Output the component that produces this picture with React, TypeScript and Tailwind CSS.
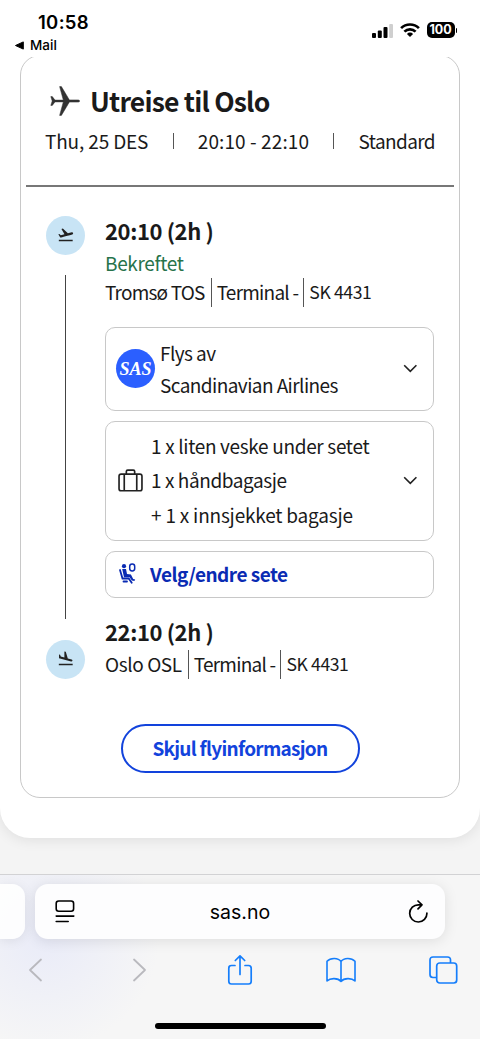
import React from 'react';
import { MdFlightTakeoff, MdFlightLand } from 'react-icons/md';

const Chevron: React.FC = () => (
  <svg className="h-[9px] w-[15px] shrink-0" viewBox="0 0 15 9" fill="none" stroke="#222" strokeWidth="1.6">
    <path d="M1.2 1.2 7.3 7.4 13.4 1.2" />
  </svg>
);

const StatusBar: React.FC = () => (
  <div className="flex h-[57px] shrink-0 justify-between bg-white font-['Inter','Liberation_Sans',sans-serif] text-black">
    <div className="pl-[15px] pt-[11px]">
      <div className="pl-[23px] text-[18.5px] font-semibold leading-[22px] tracking-[0.3px]">10:58</div>
      <div className="mt-[3px] flex items-center gap-[6px] text-[13.5px] font-medium leading-[18px]">
        <svg className="h-[9px] w-[9px]" viewBox="0 0 9 9">
          <path d="M.5 4.5 8.3.9v7.2z" stroke="#000" strokeLinejoin="round" />
        </svg>
        Mail
      </div>
    </div>
    <div className="mt-[22px] flex h-[16px] items-center pr-[23px]">
      <svg className="h-[15px] w-[21px]" viewBox="0 0 21 15">
        <rect x="0" y="10" width="4" height="5" rx="1" />
        <rect x="5.8" y="7.5" width="4" height="7.5" rx="1" />
        <rect x="11.5" y="4" width="4" height="11" rx="1" />
        <rect x="17.2" y="1" width="3.8" height="14" rx="1" fill="#cfcfcf" />
      </svg>
      <svg className="ml-[7px] h-[14px] w-[20px]" viewBox="0 0 20 14" fill="none" stroke="#000" strokeWidth="2.7">
        <path d="M1.1 5.1a12.8 12.8 0 0 1 17.8 0" />
        <path d="M4.4 8.6a8 8 0 0 1 11.2 0" />
        <path d="M10 14 6.9 10.9a4.4 4.4 0 0 1 6.2 0z" fill="#000" stroke="none" />
      </svg>
      <div className="ml-[7px] flex h-[16px] w-[28px] items-center justify-center rounded-[5px] bg-black text-[12.5px] font-bold leading-none text-white">
        100
      </div>
      <div className="ml-[1px] h-[5px] w-[1.5px] rounded-r bg-black" />
    </div>
  </div>
);

const StopIcon: React.FC<{ children: React.ReactNode }> = ({ children }) => (
  <div className="flex h-[39px] w-[39px] items-center justify-center rounded-full bg-[#c8e4f5] text-[#222]">
    {children}
  </div>
);

const StopDetails: React.FC<{ airport: string; tracking: string }> = ({ airport, tracking }) => (
  <div className="flex h-[29px] items-center whitespace-nowrap">
    <span className={`mr-[6px] ${tracking}`}>{airport}</span>
    <span className="h-[29px] w-px bg-[#555]" />
    <span className="ml-[5px] mr-[5px] tracking-[-0.75px]">Terminal -</span>
    <span className="h-[29px] w-px bg-[#555]" />
    <span className="ml-[5px] text-[17.6px] tracking-[-0.4px]">SK 4431</span>
  </div>
);

const SeatIcon: React.FC = () => (
  <svg className="h-[22px] w-[18px]" viewBox="0 0 18 22" fill="#0a2bb3">
    <circle cx="5" cy="3.2" r="2.1" />
    <path d="M3.2 6h3.8l1 5 3.9.5 2.3 4.6 2 .4-.8 1.6-2.6-.5-2.2-3.4H5z" />
    <path d="M1 7 3.500 15.5h6.200l3 4.300M4.500 18.500h3.500" fill="none" stroke="#0a2bb3" strokeWidth="1.8" strokeLinecap="round" />
    <rect x="10.700" y="1" width="5" height="7" rx="2.400" fill="none" stroke="#0a2bb3" strokeWidth="1.500" />
  </svg>
);

const FlightCard: React.FC = () => (
  <div className="mx-[20px] -mt-[2px] h-[743px] rounded-[20px] border border-[#c8c8c8] text-[#1a1a1a]">
    {/* Heading */}
    <div className="mt-[25px] flex h-[40px] items-center pl-[29px]">
      <svg className="h-[30px] w-[30px]" viewBox="0 0 30 30" fill="#333" stroke="#333" strokeWidth=".5">
        <path d="M.8 10.600h1.500l2.700 3.500h8.300L9.600.6h1.800l8 13.300h8.300c1.300 0 2 .5 2 1.100s-.7 1.100-2 1.100h-8.300l-8 13.300H9.600l3.700-13.500H5l-2.700 3.500H.8L2.200 15z" />
      </svg>
      <h1 className="ml-[10px] whitespace-nowrap text-[26.5px] font-bold leading-[40px] tracking-[-0.8px]">Utreise til Oslo</h1>
    </div>
    <div className="mx-[24px] mt-[5px] flex h-[30px] items-center justify-between whitespace-nowrap">
      <span className="tracking-[-0.15px]">Thu, 25 DES</span>
      <span className="h-[16px] w-px bg-[#555]" />
      <span className="tracking-[0.1px]">20:10 - 22:10</span>
      <span className="h-[16px] w-px bg-[#555]" />
      <span className="tracking-[-0.6px]">Standard</span>
    </div>
    <div className="mx-[5px] mt-[29px] h-[1.5px] bg-[#777]" />

    {/* Timeline */}
    <div className="mt-[29px] flex pl-[25px]">
      <div className="flex w-[39px] shrink-0 flex-col items-center">
        <StopIcon><MdFlightTakeoff size={17.5} /></StopIcon>
        <div className="mt-[20px] h-[344px] w-px bg-[#444]" />
        <div className="mt-[21px]">
          <StopIcon><MdFlightLand size={17.5} /></StopIcon>
        </div>
      </div>
      <div className="ml-[20px] w-[329px]">
        <div className="h-[30px] text-[22px] font-bold leading-[28px] tracking-[-0.4px]">20:10 (2h )</div>
        <div className="mt-[2px] h-[30px] leading-[30px] tracking-[-0.35px] text-[#27734b]">Bekreftet</div>
        <StopDetails airport="Tromsø TOS" tracking="tracking-[-0.8px]" />

        <button className="mt-[20px] flex h-[84px] w-full items-center rounded-[10px] border border-[#c8c8c8] pl-[10px] pr-[15px] text-left">
          <span className="flex h-[39px] w-[39px] shrink-0 items-center justify-center rounded-full bg-[#2b5fff] font-['Liberation_Serif',serif] text-[18px] font-bold italic leading-none text-white">
            SAS
          </span>
          <span className="ml-[5px] flex-1 leading-[32px] tracking-[-0.57px]">
            Flys av
            <br />
            Scandinavian Airlines
          </span>
          <Chevron />
        </button>

        <button className="mt-[10px] flex h-[120px] w-full items-center rounded-[10px] border border-[#c8c8c8] pl-[12px] pr-[15px] text-left">
          <svg className="h-[23px] w-[25px] shrink-0" viewBox="0 0 24 22" fill="none" stroke="#222" strokeWidth="1.6">
            <rect x="1" y="4.8" width="22" height="16" rx="2" />
            <path d="M8 4.8V2.3Q8 1 9.3 1h5.4Q16 1 16 2.3v2.5M6 4.8v16M18 4.8v16" />
          </svg>
          <span className="ml-[8px] flex-1 leading-[34.5px]">
            <span className="tracking-[-0.33px]">1 x liten veske under setet</span>
            <br />
            <span className="tracking-[-0.42px]">1 x håndbagasje</span>
            <br />
            <span className="tracking-[-0.2px]">+ 1 x innsjekket bagasje</span>
          </span>
          <Chevron />
        </button>

        <button className="mt-[10px] flex h-[47px] w-full items-center rounded-[10px] border border-[#c8c8c8] pl-[13px] font-bold text-[#0a2bb3]">
          <SeatIcon />
          <span className="ml-[13px] tracking-[-0.5px]">Velg/endre sete</span>
        </button>

        <div className="mt-[20px] h-[30px] text-[22px] font-bold leading-[27px] tracking-[-0.4px]">22:10 (2h )</div>
        <div className="mt-[2px]">
          <StopDetails airport="Oslo OSL" tracking="tracking-[-0.4px]" />
        </div>
      </div>
    </div>

    <button className="mx-auto mt-[45px] flex h-[49px] w-[239px] items-center justify-center rounded-full border-[2.5px] border-[#1243dc] font-bold tracking-[-0.7px] text-[#1243dc]">
      Skjul flyinformasjon
    </button>
  </div>
);

const BrowserBar: React.FC = () => (
  <div className="flex h-[165px] shrink-0 flex-col overflow-hidden border-t border-[#d2d2d4] bg-[#f6f6f6] bg-[radial-gradient(circle_at_45px_60px,#e9ebf8_0px,#f6f6f6_115px)] font-['Inter','Liberation_Sans',sans-serif]">
    <div className="mt-[9px] flex gap-[10px]">
      <div className="h-[55px] w-[25px] rounded-r-[13px] bg-white/90 shadow-[0_2px_12px_rgba(0,0,0,0.08)]" />
      <div className="flex h-[55px] w-[410px] items-center justify-between rounded-[13px] bg-[#fdfdfe] pl-[20px] pr-[17px] shadow-[0_2px_14px_rgba(0,0,0,0.1)]">
        <svg className="h-[23px] w-[20px]" viewBox="0 0 20 23" fill="none" stroke="#000" strokeWidth="1.6" strokeLinecap="round">
          <rect x="1.2" y="1" width="17.4" height="10.2" rx="2.5" />
          <path d="M1.2 16.1h17.6M1.2 21.5h12" />
        </svg>
        <span className="mr-[3px] mt-[3px] text-[19.5px] text-black">sas.no</span>
        <svg className="h-[23px] w-[20px]" viewBox="0 0 20 23" fill="none" stroke="#000" strokeWidth="1.7" strokeLinecap="round" strokeLinejoin="round">
          <path d="M14 4.800H10.500A8.600 8.600 0 1 0 18.900 13.200M10 1 14 4.800 10 8.800" />
        </svg>
      </div>
    </div>

    <div className="-ml-[16px] mt-[14px] grid h-[34px] w-[510px] shrink-0 grid-cols-5 place-items-center">
      <svg className="h-[24px] w-[15px]" viewBox="0 0 15 24" fill="none" stroke="#b9b9be" strokeWidth="1.8" strokeLinecap="round" strokeLinejoin="round">
        <path d="M13 1.5 2 12l11 10.5" />
      </svg>
      <svg className="ml-[5px] h-[24px] w-[15px]" viewBox="0 0 15 24" fill="none" stroke="#b9b9be" strokeWidth="1.8" strokeLinecap="round" strokeLinejoin="round">
        <path d="M2 1.5 13 12 2 22.5" />
      </svg>
      <svg className="ml-[2px] h-[32px] w-[26px]" viewBox="0 0 26 32" fill="none" stroke="#157efb" strokeWidth="1.7" strokeLinecap="round" strokeLinejoin="round">
        <path d="M8 11.5H4.5Q1.8 11.5 1.8 14.2v13.1Q1.8 30 4.5 30h17q2.7 0 2.7-2.7V14.2q0-2.7-2.7-2.7H18M13 20.5V2M8.3 6.5 13 1.8l4.7 4.7" />
      </svg>
      <svg className="h-[26px] w-[30px]" viewBox="0 0 30 26" fill="none" stroke="#157efb" strokeWidth="1.6" strokeLinejoin="round">
        <path d="M15 4.5C12.3.5 4.500.4 1 4.300V24c3.300-3.200 11-3.200 14 .5 3-3.700 10.700-3.700 14-.5V4.300C25.500.4 17.700.5 15 4.500zV24.500" />
      </svg>
      <svg className="h-[28px] w-[29px]" viewBox="0 0 29 28" fill="none" stroke="#157efb" strokeWidth="1.7">
        <path d="M21.500 7V4Q21.500 1 18.500 1H4Q1 1 1 4v14.500q0 3 3 3h3.500" />
        <rect x="7.700" y="7" width="20" height="20" rx="3" />
      </svg>
    </div>

    {/* Home indicator */}
    <div className="mx-auto mt-[36px] h-[6px] w-[171px] rounded-full bg-black" />
  </div>
);

export default function App() {
  return (
    <div className="flex h-[1039px] w-[480px] flex-col overflow-hidden bg-[#f4f4f4] font-['Noto_Sans_CJK_SC','Noto_Sans',sans-serif] text-[19px]">
      <StatusBar />
      <main className="h-[817px] shrink-0 overflow-hidden">
        <div className="h-[781px] overflow-hidden rounded-b-[30px] bg-white shadow-[0_2px_14px_rgba(0,0,0,0.09)]">
          <FlightCard />
        </div>
      </main>
      <BrowserBar />
    </div>
  );
}
